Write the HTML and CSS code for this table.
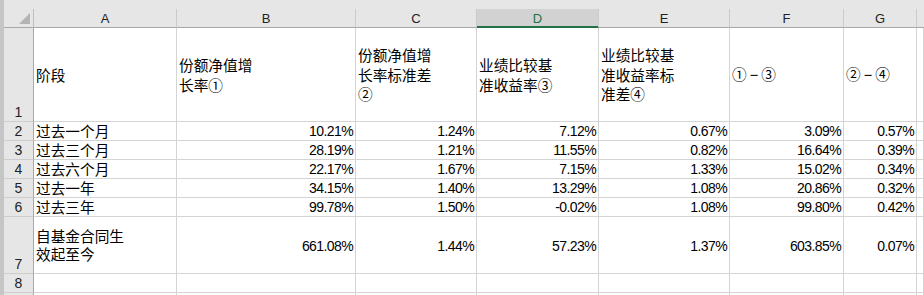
FILE: index.html
```html
<!DOCTYPE html>
<html lang="zh-CN">
<head>
<meta charset="utf-8">
<title>业绩表现</title>
<link rel="stylesheet" href="styles.css">
</head>
<body>
<div class="app">
  <div class="edge"></div>
  <div class="sheet">
    <div class="topband"></div>
    <div class="grid">
      <div class="ch corner"><span class="tri"></span></div>
      <div class="ch">A</div>
      <div class="ch">B</div>
      <div class="ch">C</div>
      <div class="ch sel">D</div>
      <div class="ch">E</div>
      <div class="ch">F</div>
      <div class="ch">G</div>
      <div class="ch last"></div>

      <div class="rh">1</div>
      <div class="c t mid hd"><span>阶段</span></div>
      <div class="c t mid hd"><span>份额净值增<br>长率①</span></div>
      <div class="c t mid hd"><span>份额净值增<br>长率标准差<br>②</span></div>
      <div class="c t mid hd"><span>业绩比较基<br>准收益率③</span></div>
      <div class="c t mid hd"><span>业绩比较基<br>准收益率标<br>准差④</span></div>
      <div class="c t mid hd"><span>①<span class="dash">−</span>③</span></div>
      <div class="c t mid hd"><span>②<span class="dash">−</span>④</span></div>
      <div class="c"></div>

      <div class="rh">2</div>
      <div class="c t">过去一个月</div>
      <div class="c n">10.21%</div>
      <div class="c n">1.24%</div>
      <div class="c n">7.12%</div>
      <div class="c n">0.67%</div>
      <div class="c n">3.09%</div>
      <div class="c n">0.57%</div>
      <div class="c"></div>

      <div class="rh">3</div>
      <div class="c t">过去三个月</div>
      <div class="c n">28.19%</div>
      <div class="c n">1.21%</div>
      <div class="c n">11.55%</div>
      <div class="c n">0.82%</div>
      <div class="c n">16.64%</div>
      <div class="c n">0.39%</div>
      <div class="c"></div>

      <div class="rh">4</div>
      <div class="c t">过去六个月</div>
      <div class="c n">22.17%</div>
      <div class="c n">1.67%</div>
      <div class="c n">7.15%</div>
      <div class="c n">1.33%</div>
      <div class="c n">15.02%</div>
      <div class="c n">0.34%</div>
      <div class="c"></div>

      <div class="rh">5</div>
      <div class="c t">过去一年</div>
      <div class="c n">34.15%</div>
      <div class="c n">1.40%</div>
      <div class="c n">13.29%</div>
      <div class="c n">1.08%</div>
      <div class="c n">20.86%</div>
      <div class="c n">0.32%</div>
      <div class="c"></div>

      <div class="rh">6</div>
      <div class="c t">过去三年</div>
      <div class="c n">99.78%</div>
      <div class="c n">1.50%</div>
      <div class="c n">-0.02%</div>
      <div class="c n">1.08%</div>
      <div class="c n">99.80%</div>
      <div class="c n">0.42%</div>
      <div class="c"></div>

      <div class="rh">7</div>
      <div class="c t mid two"><span>自基金合同生<br>效起至今</span></div>
      <div class="c n mid">661.08%</div>
      <div class="c n mid">1.44%</div>
      <div class="c n mid">57.23%</div>
      <div class="c n mid">1.37%</div>
      <div class="c n mid">603.85%</div>
      <div class="c n mid">0.07%</div>
      <div class="c"></div>

      <div class="rh">8</div>
      <div class="c"></div>
      <div class="c"></div>
      <div class="c"></div>
      <div class="c"></div>
      <div class="c"></div>
      <div class="c"></div>
      <div class="c"></div>
      <div class="c"></div>

      <div class="rh"></div>
      <div class="c"></div>
      <div class="c"></div>
      <div class="c"></div>
      <div class="c"></div>
      <div class="c"></div>
      <div class="c"></div>
      <div class="c"></div>
      <div class="c"></div>
    </div>
  </div>
</div>
</body>
</html>
```

FILE: styles.css
```css
html, body {
  margin: 0;
  padding: 0;
  background: #ffffff;
  overflow: hidden;
}

.app {
  display: flex;
  width: 924px;
  height: 295px;
  overflow: hidden;
}

.edge {
  width: 4px;
  flex: none;
  background: #c6c6c6;
}

.sheet {
  flex: 1;
  display: flex;
  flex-direction: column;
  min-width: 0;
}

.topband {
  height: 9px;
  flex: none;
  background: #e6e6e6;
}

.grid {
  display: grid;
  grid-template-columns: 30px 143px 179px 121px 122px 131px 114px 73px 1fr;
  grid-template-rows: 19px 94px 19px 19px 19px 19px 19px 57px 19px 19px;
  font-family: "Noto Sans CJK SC", "Noto Sans", sans-serif;
  font-size: 14.67px;
  line-height: 18px;
  color: #000000;
}

.grid > div {
  box-sizing: border-box;
  min-width: 0;
  white-space: nowrap;
}

/* column headers */
.ch {
  background: #e6e6e6;
  border-right: 1px solid #cacaca;
  border-bottom: 1px solid #a8a8a8;
  display: flex;
  align-items: center;
  justify-content: center;
  font-family: "Liberation Sans", Arial, sans-serif;
  font-size: 13px;
  line-height: 17px;
  color: #222222;
  padding-top: 1px;
}

.ch.sel {
  background: #d2d2d2;
  color: #217346;
  border-bottom: 1px solid #217346;
  box-shadow: inset 0 -1px 0 #217346;
}

.ch.corner {
  position: relative;
  border-right: 1px solid #bdbdbd;
}

.ch.last {
  border-right: none;
}

.tri {
  position: absolute;
  right: 3px;
  bottom: 3px;
  width: 0;
  height: 0;
  border-left: 11px solid transparent;
  border-bottom: 11px solid #b4b4b4;
}

/* row headers */
.rh {
  background: #e6e6e6;
  border-right: 1px solid #a8a8a8;
  border-bottom: 1px solid #cdcdcd;
  display: flex;
  align-items: flex-end;
  justify-content: center;
  font-family: "Liberation Sans", Arial, sans-serif;
  font-size: 14px;
  line-height: 17px;
  color: #222222;
}

/* body cells */
.c {
  border-right: 1px solid #d4d4d4;
  border-bottom: 1px solid #d4d4d4;
  display: flex;
  flex-direction: column;
  justify-content: flex-end;
}

.c.t {
  align-items: flex-start;
  padding-left: 2px;
}

.c.n {
  align-items: flex-end;
  padding-right: 2px;
  text-align: right;
  font-family: "Liberation Sans", Arial, sans-serif;
  font-size: 14px;
  letter-spacing: -0.6px;
  line-height: 17px;
}

.c.mid {
  justify-content: center;
}

.c.n.mid {
  padding-top: 3px;
}

.c.two {
  line-height: 18.5px;
}

.c.hd {
  line-height: 19.5px;
}

.dash {
  display: inline-block;
  width: 14.67px;
  text-align: center;
  font-family: "Liberation Sans", Arial, sans-serif;
}
```
